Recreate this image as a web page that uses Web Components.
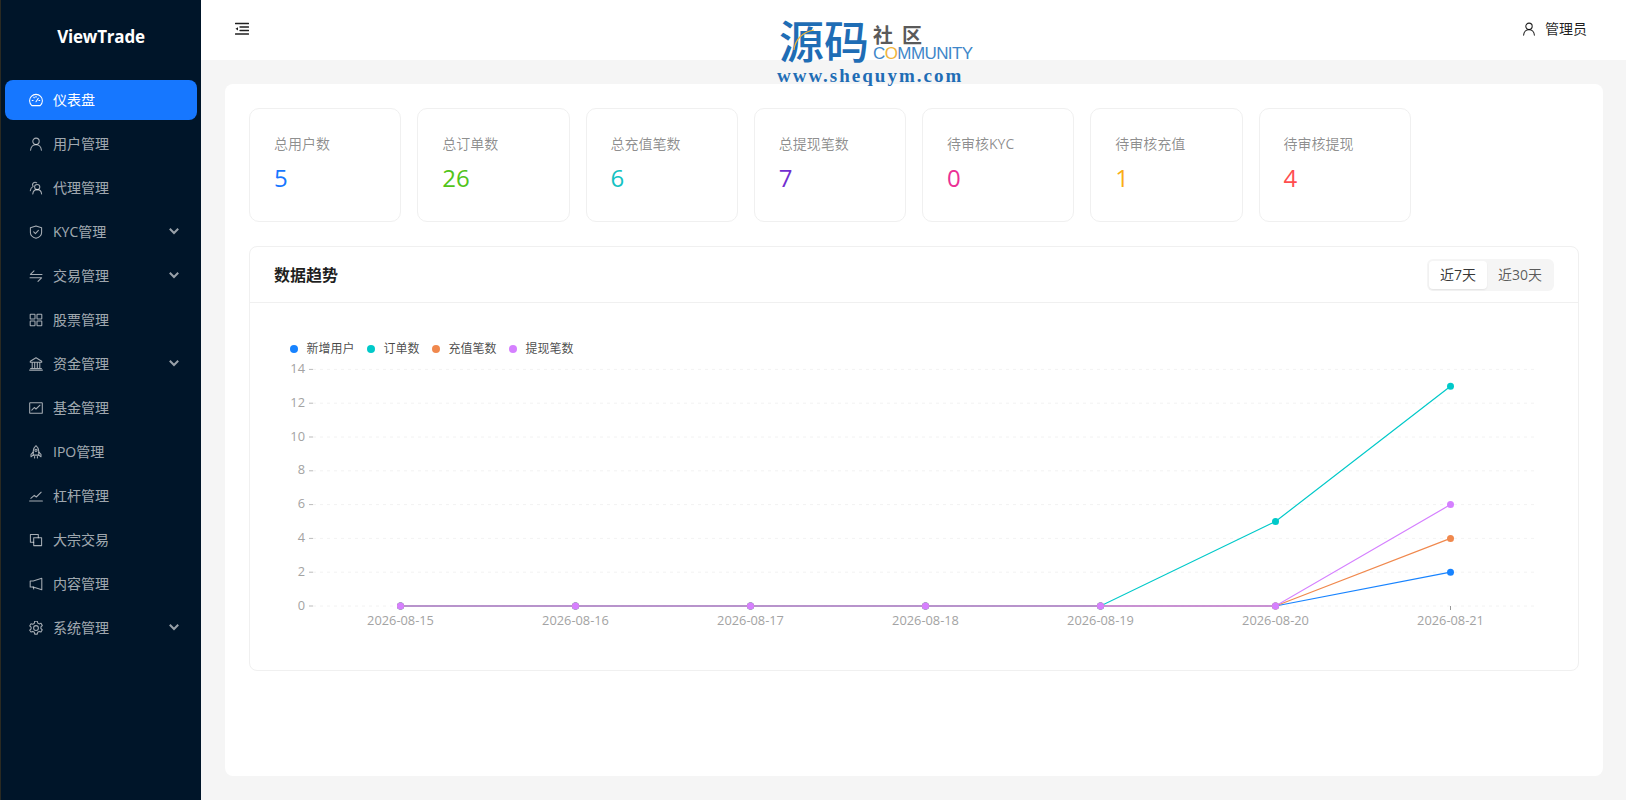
<!DOCTYPE html>
<html lang="zh">
<head>
<meta charset="utf-8">
<title>ViewTrade</title>
<style>
  html, body { margin: 0; height: 100%; }
  body {
    background: #f5f5f5;
    font-family: "Open Sans", "Noto Sans CJK SC", sans-serif;
    font-size: 14px;
    overflow: hidden;
  }
</style>
</head>
<body>
<app-shell>
  <side-nav slot="side">
    <nav-item icon="dashboard" active>仪表盘</nav-item>
    <nav-item icon="user">用户管理</nav-item>
    <nav-item icon="agent">代理管理</nav-item>
    <nav-item icon="shield" caret>KYC管理</nav-item>
    <nav-item icon="swap" caret>交易管理</nav-item>
    <nav-item icon="apps">股票管理</nav-item>
    <nav-item icon="bank" caret>资金管理</nav-item>
    <nav-item icon="fund">基金管理</nav-item>
    <nav-item icon="rocket">IPO管理</nav-item>
    <nav-item icon="stock">杠杆管理</nav-item>
    <nav-item icon="block">大宗交易</nav-item>
    <nav-item icon="notice">内容管理</nav-item>
    <nav-item icon="gear" caret>系统管理</nav-item>
  </side-nav>
  <top-bar slot="top">管理员</top-bar>
  <stat-card label="总用户数" value="5" color="#1677ff"></stat-card>
  <stat-card label="总订单数" value="26" color="#52c41a"></stat-card>
  <stat-card label="总充值笔数" value="6" color="#13c2c2"></stat-card>
  <stat-card label="总提现笔数" value="7" color="#722ed1"></stat-card>
  <stat-card label="待审核KYC" value="0" color="#eb2f96"></stat-card>
  <stat-card label="待审核充值" value="1" color="#faad14"></stat-card>
  <stat-card label="待审核提现" value="4" color="#ff4d4f"></stat-card>
  <trend-chart slot="chart"></trend-chart>
</app-shell>
<site-mark></site-mark>

<script>
// 14x14 stroke icons, same viewBox everywhere
const ICONS = {
  dashboard: '<path d="M2.800 12.600A6.400 6.400 0 1 1 11.200 12.600Z"/><path d="M7 8.800 9.300 5.200M3.200 7.400h.9M9.900 7.400h.9M4.800 4.200l.5.6M7 3.300v.9"/>',
  user: '<circle cx="7" cy="4.300" r="3.200"/><path d="M1.600 13.200C1.800 10 4.100 7.600 7 7.600s5.200 2.400 5.400 5.600"/>',
  agent: '<circle cx="8.200" cy="6" r="2.600"/><path d="M3.800 13c.2-2.600 2-4.400 4.400-4.400s4.200 1.800 4.400 4.400"/><path d="M7.700 1.800A2.600 2.600 0 0 0 3.500 3.600c0 .7.3 1.300.7 1.800C2.600 6.200 1.500 7.800 1.300 9.800"/>',
  shield: '<path d="M7 .9 12.600 2.800v4.600c0 3-2.600 4.900-5.600 5.900-3-1-5.600-2.900-5.600-5.900V2.800Z"/><path d="M4.700 6.900 6.400 8.600 9.400 5.300"/>',
  swap: '<path d="M5 1.800 1.400 5.400H13M1 8.800H12.600L9 12.400"/>',
  apps: '<rect x="1.200" y="1.200" width="4.800" height="4.800" rx=".5"/><rect x="8" y="1.200" width="4.800" height="4.800" rx=".5"/><rect x="1.200" y="8" width="4.800" height="4.800" rx=".5"/><rect x="8" y="8" width="4.800" height="4.800" rx=".5"/>',
  bank: '<path d="M7 .8 1.300 4.200V5.200H12.700V4.200ZM.6 13.100h12.800M1.600 11.400h10.800M3.200 5.200v6.200M5.700 5.200v6.200M8.300 5.200v6.200M10.800 5.200v6.200"/>',
  fund: '<rect x=".7" y="1.700" width="12.600" height="10.600" rx=".4"/><path d="M2.800 9.200 5.300 6.500 7 8 11 4.200"/>',
  rocket: '<path d="M7 .7C5.100 2.300 4.200 4.300 4.200 6.200v3.900h5.600V6.200C9.800 4.300 8.900 2.300 7 .7Z"/><circle cx="7" cy="5.300" r="1.100"/><path d="M4.200 7.200 2 9.400v2.400l2.200-1.700M9.800 7.200 12 9.400v2.400l-2.200-1.700M5.600 11.600 5.600 13M8.400 11.600 8.400 13"/>',
  stock: '<path d="M.6 11.900H13.400M1.800 9.300 5.300 6.300 7.300 8 12.200 3.200"/>',
  block: '<path d="M9.300 4.700V1.400H1.400v7.900h3.300"/><rect x="4.700" y="4.700" width="7.900" height="7.900"/>',
  notice: '<path d="M12.800 1.300V12.700L4.200 10H1.200V4H4.200Z"/><path d="M4.200 10 4.800 12"/>',
  gear: '<path d="M5.700.9h2.600l.4 1.800 1.500.9 1.800-.6 1.300 2.200-1.400 1.300v1.700l1.400 1.300-1.300 2.200-1.800-.6-1.500.9-.4 1.800H5.700l-.4-1.800-1.500-.9-1.800.6L.7 9.900l1.400-1.300V6.900L.7 5.600 2 3.400l1.800.6 1.500-.9Z" transform="translate(0 -.7)"/><circle cx="7" cy="7" r="2.400"/>',
  menu: '<path d="M.5 1.500H13.500M5 5H13.500M5 8.500H13.500M.5 12H13.500" stroke-width="1.300"/><path d="M.5 6.800 3 5.200V8.400Z" fill="currentColor" stroke="none"/>'
};

function iconSvg(name, size) {
  return `<svg width="${size}" height="${size}" viewBox="0 0 14 14" fill="none" stroke="currentColor" stroke-width="1.050" stroke-linejoin="round" stroke-linecap="round">${ICONS[name]}</svg>`;
}

const shellTemplate = document.createElement("template");
shellTemplate.innerHTML = `
  <style>
    :host { display: grid; grid-template-columns: 201px 1fr; height: 800px; }
    main { display: flex; flex-direction: column; min-width: 0; }
    .content {
      margin: 24px 23px 24px 24px;
      flex: 1;
      background: #fff;
      border-radius: 8px;
      padding: 24px;
      display: flex;
      flex-direction: column;
      gap: 24px;
    }
    .stats { display: grid; grid-template-columns: repeat(8, 1fr); gap: 16px; }
  </style>
  <slot name="side"></slot>
  <main>
    <slot name="top"></slot>
    <div class="content">
      <div class="stats"><slot></slot></div>
      <slot name="chart"></slot>
    </div>
  </main>
`;

class AppShell extends HTMLElement {
  constructor() {
    super();
    this.root = this.attachShadow({ mode: "open" });
    this.root.appendChild(shellTemplate.content.cloneNode(true));
  }
}

const sideTemplate = document.createElement("template");
sideTemplate.innerHTML = `
  <style>
    :host {
      display: block;
      background: #001529;
      border-left: 1px solid #2a2a22;
      box-sizing: border-box;
      height: 800px;
    }
    .logo {
      height: 72px;
      display: flex;
      align-items: center;
      justify-content: center;
      color: #fff;
      font-size: 17px;
      font-weight: 700;
      letter-spacing: -.2px;
    }
    nav { display: flex; flex-direction: column; gap: 4px; padding: 8px 4px 0; }
  </style>
  <div class="logo">ViewTrade</div>
  <nav><slot></slot></nav>
`;

class SideNav extends HTMLElement {
  constructor() {
    super();
    this.root = this.attachShadow({ mode: "open" });
    this.root.appendChild(sideTemplate.content.cloneNode(true));
  }
}

class NavItem extends HTMLElement {
  constructor() {
    super();
    this.root = this.attachShadow({ mode: "open" });
  }

  connectedCallback() {
    const caret = this.hasAttribute("caret")
      ? `<svg class="caret" width="10" height="10" viewBox="0 0 10 10" fill="none" stroke="currentColor" stroke-width="2"><path d="M.8 2.800 5 7 9.200 2.800"/></svg>`
      : "";
    this.root.innerHTML = `
      <style>
        :host {
          display: flex;
          align-items: center;
          height: 40px;
          padding: 0 18px 0 24px;
          border-radius: 8px;
          color: rgba(255,255,255,.65);
          font-size: 14px;
          gap: 10px;
        }
        :host([active]) { background: #1677ff; color: #fff; }
        svg { flex: none; }
        span { padding-bottom: 2px; }
        .caret { margin-left: auto; margin-bottom: 2px; color: rgba(255,255,255,.6); }
      </style>
      ${iconSvg(this.getAttribute("icon"), 14)}
      <span><slot></slot></span>
      ${caret}
    `;
  }
}

const topTemplate = document.createElement("template");
topTemplate.innerHTML = `
  <style>
    :host {
      display: flex;
      align-items: center;
      justify-content: space-between;
      box-sizing: border-box;
      height: 60px;
      background: #fff;
      padding: 0 39px 3px 34px;
      color: rgba(0,0,0,.88);
    }
    .who { display: flex; align-items: center; gap: 9px; }
    .name { padding-bottom: 1px; }
    svg { display: block; }
  </style>
  <span class="fold"></span>
  <span class="who"><span class="user"></span><span class="name"><slot></slot></span></span>
`;

class TopBar extends HTMLElement {
  constructor() {
    super();
    this.root = this.attachShadow({ mode: "open" });
    this.root.appendChild(topTemplate.content.cloneNode(true));
    this.root.querySelector(".fold").innerHTML = iconSvg("menu", 14);
    this.root.querySelector(".user").innerHTML = iconSvg("user", 14);
  }
}

class StatCard extends HTMLElement {
  constructor() {
    super();
    this.root = this.attachShadow({ mode: "open" });
  }

  connectedCallback() {
    this.root.innerHTML = `
      <style>
        :host {
          display: block;
          box-sizing: border-box;
          height: 114px;
          padding: 24px;
          border: 1px solid #f0f0f0;
          border-radius: 10px;
        }
        .label { color: rgba(0,0,0,.45); font-size: 14px; line-height: 22px; }
        .value { font-size: 24px; line-height: 32px; margin-top: 7px; font-weight: 400; }
      </style>
      <div class="label">${this.getAttribute("label")}</div>
      <div class="value" style="color:${this.getAttribute("color")}">${this.getAttribute("value")}</div>
    `;
  }
}

const SERIES = [
  { name: "新增用户", color: "#1783ff", data: [0, 0, 0, 0, 0, 0, 2], legendX: 294 },
  { name: "订单数", color: "#00c9c9", data: [0, 0, 0, 0, 0, 5, 13], legendX: 371 },
  { name: "充值笔数", color: "#f0884d", data: [0, 0, 0, 0, 0, 0, 4], legendX: 436 },
  { name: "提现笔数", color: "#d580ff", data: [0, 0, 0, 0, 0, 0, 6], legendX: 513 }
];
const DATES = ["2026-08-15", "2026-08-16", "2026-08-17", "2026-08-18", "2026-08-19", "2026-08-20", "2026-08-21"];

const px = i => 400.5 + i * 175;
const py = v => 606 - v * 16.9;

function chartSvg() {
  let out = "";
  // legend
  for (const s of SERIES) {
    out += `<circle cx="${s.legendX}" cy="349" r="4" fill="${s.color}"/>`;
    out += `<text x="${s.legendX + 12.5}" y="353" fill="rgba(0,0,0,.72)" font-size="12">${s.name}</text>`;
  }
  // y axis + grid
  for (let v = 0; v <= 14; v += 2) {
    const y = py(v);
    out += `<line x1="313" x2="1535" y1="${y}" y2="${y}" stroke="#eaeaea" stroke-opacity=".6" stroke-dasharray="3 4"/>`;
    out += `<line x1="309" x2="313" y1="${y}" y2="${y}" stroke="#bbb"/>`;
    out += `<text x="305" y="${y + 3.5}" text-anchor="end" fill="#a3a3a3" font-size="12.800">${v}</text>`;
  }
  // x labels
  DATES.forEach((d, i) => {
    out += `<text x="${px(i)}" y="625" text-anchor="middle" fill="#a3a3a3" font-size="12.800">${d}</text>`;
  });
  out += `<line x1="${px(6)}" x2="${px(6)}" y1="606" y2="610" stroke="#999"/>`;
  // lines, then the points over them
  for (const s of SERIES) {
    const pts = s.data.map((v, i) => `${px(i)},${py(v)}`).join(" ");
    out += `<polyline points="${pts}" fill="none" stroke="${s.color}" stroke-width="1.200"/>`;
  }
  for (const s of SERIES) {
    s.data.forEach((v, i) => {
      out += `<circle cx="${px(i)}" cy="${py(v)}" r="3.500" fill="${s.color}"/>`;
    });
  }
  return out;
}

const chartTemplate = document.createElement("template");
chartTemplate.innerHTML = `
  <style>
    :host {
      display: block;
      border: 1px solid #f0f0f0;
      border-radius: 8px;
      height: 425px;
      box-sizing: border-box;
    }
    header {
      height: 56px;
      box-sizing: border-box;
      border-bottom: 1px solid #f0f0f0;
      padding: 0 24px;
      display: flex;
      align-items: center;
      justify-content: space-between;
    }
    h2 { margin: 0 0 2px; font-size: 16px; font-weight: 600; color: rgba(0,0,0,.88); }
    svg { display: block; font-family: "Open Sans", "Noto Sans CJK SC", sans-serif; }
  </style>
  <header>
    <h2>数据趋势</h2>
    <seg-toggle></seg-toggle>
  </header>
  <svg width="1328" height="367" viewBox="250 303 1328 367"></svg>
`;

class TrendChart extends HTMLElement {
  constructor() {
    super();
    this.root = this.attachShadow({ mode: "open" });
    this.root.appendChild(chartTemplate.content.cloneNode(true));
    this.root.querySelector("svg").innerHTML = chartSvg();
  }
}

const toggleTemplate = document.createElement("template");
toggleTemplate.innerHTML = `
  <style>
    :host {
      display: flex;
      padding: 2px;
      background: #f5f5f5;
      border-radius: 6px;
      font-size: 14px;
      color: rgba(0,0,0,.65);
    }
    span { height: 28px; line-height: 27px; padding: 0 11px; border-radius: 4px; }
    span:last-child { padding-right: 10px; }
    .on {
      background: #fff;
      color: rgba(0,0,0,.8);
      box-shadow: 0 1px 2px rgba(0,0,0,.06), 0 1px 3px -1px rgba(0,0,0,.05);
    }
  </style>
  <span class="on">近7天</span><span>近30天</span>
`;

class SegToggle extends HTMLElement {
  constructor() {
    super();
    this.root = this.attachShadow({ mode: "open" });
    this.root.appendChild(toggleTemplate.content.cloneNode(true));
  }
}

// the watermark that lies over the top bar
const markTemplate = document.createElement("template");
markTemplate.innerHTML = `
  <style>
    :host {
      position: absolute;
      left: 777px;
      top: 18px;
      width: 200px;
      color: #1f6db5;
    }
    .row { display: flex; align-items: flex-end; padding-left: 2px; gap: 4px; height: 44px; position: relative; }
    .big { font: 500 45px/44px "Noto Sans CJK SC", sans-serif; }
    .side { display: flex; flex-direction: column; padding-bottom: 1px; }
    .she { font: 700 20px/21px "Noto Sans CJK SC", sans-serif; color: #5a5a5a; letter-spacing: 9px; padding-bottom: 1px; }
    .com { font: 400 17px/15px "Liberation Sans", sans-serif; letter-spacing: -.6px; color: #3f87c9; }
    .com b { font-weight: 400; color: #f0b43c; }
    .url { font: 700 19px/20px "Liberation Serif", serif; letter-spacing: 2px; margin-top: 4px; }
    svg { position: absolute; left: 15px; top: 10px; }
  </style>
  <div class="row">
    <span class="big">源码</span>
    <span class="side"><span class="she">社区</span><span class="com">C<b>O</b>MMUNITY</span></span>
    <svg width="24" height="24" viewBox="0 0 24 24" fill="none" stroke="#f0b43c" stroke-width="1.200"><path d="M2 22C3 12 10 4 22 2"/></svg>
  </div>
  <div class="url">www.shequym.com</div>
`;

class SiteMark extends HTMLElement {
  constructor() {
    super();
    this.root = this.attachShadow({ mode: "open" });
    this.root.appendChild(markTemplate.content.cloneNode(true));
  }
}

customElements.define("app-shell", AppShell);
customElements.define("side-nav", SideNav);
customElements.define("nav-item", NavItem);
customElements.define("top-bar", TopBar);
customElements.define("stat-card", StatCard);
customElements.define("trend-chart", TrendChart);
customElements.define("seg-toggle", SegToggle);
customElements.define("site-mark", SiteMark);
</script>
</body>
</html>
